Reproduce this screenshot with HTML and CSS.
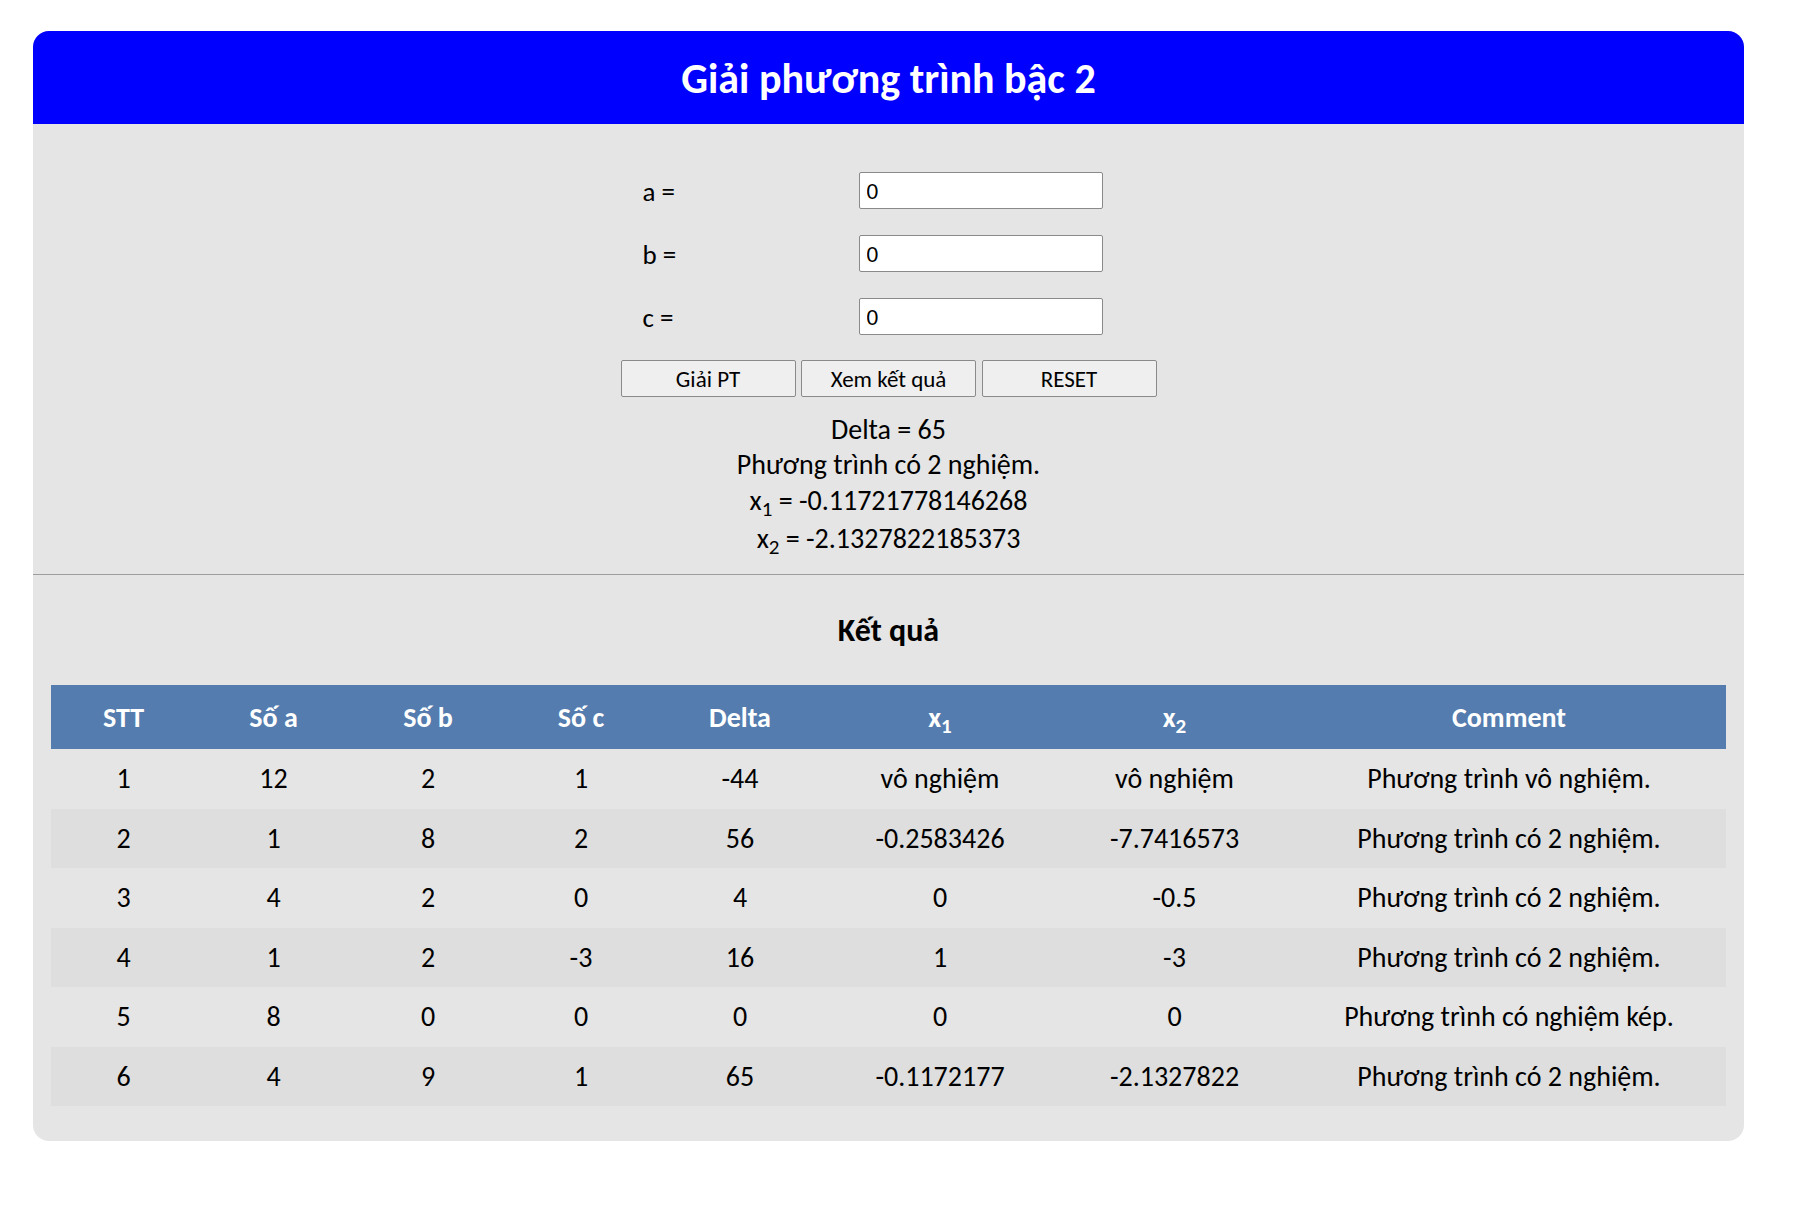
FILE: index.html
```html
<!DOCTYPE html>
<html lang="vi">
<head>
<meta charset="utf-8">
<title>Giải phương trình bậc 2</title>
<link rel="stylesheet" href="styles.css">
</head>
<body>
<div class="card">
  <div class="card-header">Giải phương trình bậc 2</div>
  <div class="solver">
    <form class="form-grid">
      <label class="lbl" for="a">a =</label>
      <input class="num" id="a" type="text" value="0">
      <label class="lbl" for="b">b =</label>
      <input class="num" id="b" type="text" value="0">
      <label class="lbl" for="c">c =</label>
      <input class="num" id="c" type="text" value="0">
      <div class="btn-row">
        <button type="button" class="btn">Giải PT</button>
        <button type="button" class="btn">Xem kết quả</button>
        <button type="button" class="btn">RESET</button>
      </div>
    </form>
    <div class="result">
      <div class="res-line">Delta = 65</div>
      <div class="res-line">Phương trình có 2 nghiệm.</div>
      <div class="res-line res-sub">x<sub>1</sub> = -0.11721778146268</div>
      <div class="res-line res-sub2">x<sub>2</sub> = -2.1327822185373</div>
    </div>
  </div>
  <div class="divider"></div>
  <h2 class="section-title">Kết quả</h2>
  <table class="results">
    <colgroup>
      <col class="c-stt"><col class="c-a"><col class="c-b"><col class="c-c"><col class="c-d"><col class="c-x1"><col class="c-x2"><col class="c-cm">
    </colgroup>
    <thead>
      <tr><th>STT</th><th>Số a</th><th>Số b</th><th>Số c</th><th>Delta</th><th>x<sub>1</sub></th><th>x<sub>2</sub></th><th>Comment</th></tr>
    </thead>
    <tbody>
      <tr><td>1</td><td>12</td><td>2</td><td>1</td><td>-44</td><td>vô nghiệm</td><td>vô nghiệm</td><td>Phương trình vô nghiệm.</td></tr>
      <tr><td>2</td><td>1</td><td>8</td><td>2</td><td>56</td><td>-0.2583426</td><td>-7.7416573</td><td>Phương trình có 2 nghiệm.</td></tr>
      <tr><td>3</td><td>4</td><td>2</td><td>0</td><td>4</td><td>0</td><td>-0.5</td><td>Phương trình có 2 nghiệm.</td></tr>
      <tr><td>4</td><td>1</td><td>2</td><td>-3</td><td>16</td><td>1</td><td>-3</td><td>Phương trình có 2 nghiệm.</td></tr>
      <tr><td>5</td><td>8</td><td>0</td><td>0</td><td>0</td><td>0</td><td>0</td><td>Phương trình có nghiệm kép.</td></tr>
      <tr><td>6</td><td>4</td><td>9</td><td>1</td><td>65</td><td>-0.1172177</td><td>-2.1327822</td><td>Phương trình có 2 nghiệm.</td></tr>
    </tbody>
  </table>
</div>
</body>
</html>
```
FILE: styles.css
```css
* { box-sizing: border-box; }
html, body { margin: 0; padding: 0; background: #ffffff; }
body {
  font-family: Carlito, Calibri, Lato, "Noto Sans", sans-serif;
  color: #000;
}
.card {
  width: 1711px;
  margin: 31px 0 0 33px;
  background: #e5e5e5;
  border-radius: 16px;
  padding-bottom: 35px;
}
.card-header {
  height: 93px;
  background: #0000ff;
  color: #fff;
  border-radius: 16px 16px 0 0;
  display: flex;
  align-items: center;
  justify-content: center;
  font-weight: 700;
  font-size: 42px;
  padding-top: 2px;
}
.solver {
  padding: 48px 0 17px;
}
.form-grid {
  width: 536px;
  margin: 0 auto;
  display: grid;
  grid-template-columns: 238px 298px;
  grid-auto-rows: 37px;
  row-gap: 26px;
}
.lbl {
  padding-left: 22px;
  display: flex;
  align-items: center;
  font-size: 27px;
  padding-top: 2px;
}
.num {
  width: 244px;
  height: 37px;
  border: 1px solid #8a8a8a;
  border-radius: 2px;
  background: #fff;
  font-family: inherit;
  font-size: 23px;
  padding: 0 7px;
  color: #000;
}
.btn-row {
  grid-column: 1 / -1;
  display: flex;
  justify-content: space-between;
  margin-top: -1px;
}
.btn {
  width: 175px;
  height: 37px;
  background: #efefef;
  border: 1px solid #8a8a8a;
  border-radius: 2px;
  font-family: inherit;
  font-size: 23px;
  color: #000;
  padding: 0;
}
.result {
  margin-top: 14px;
  text-align: center;
  font-size: 28px;
}
.res-line { line-height: 35px; }
.res-sub { height: 37px; line-height: 37px; }
.res-sub2 { height: 38px; line-height: 39px; }
sub { font-size: 0.75em; line-height: 0; vertical-align: -0.3em; }
.divider {
  border-top: 1px solid #9e9e9e;
}
.section-title {
  margin: 0;
  padding-top: 38px;
  height: 110px;
  text-align: center;
  font-size: 32px;
  font-weight: 700;
  line-height: 36px;
}
.results {
  width: 1675px;
  margin: 0 18px;
  border-collapse: collapse;
  table-layout: fixed;
  font-size: 28px;
}
.c-stt { width: 145px; }
.c-a { width: 155px; }
.c-b { width: 154px; }
.c-c { width: 152px; }
.c-d { width: 166px; }
.c-x1 { width: 234px; }
.c-x2 { width: 235px; }
.c-cm { width: 434px; }
.results th {
  height: 64px;
  background: #547cae;
  color: #fff;
  font-weight: 700;
  text-align: center;
  padding: 0;
}
.results td {
  height: 59.5px;
  text-align: center;
  padding: 0;
}
.results tbody tr:nth-child(even) td { background: #dedede; }
```
